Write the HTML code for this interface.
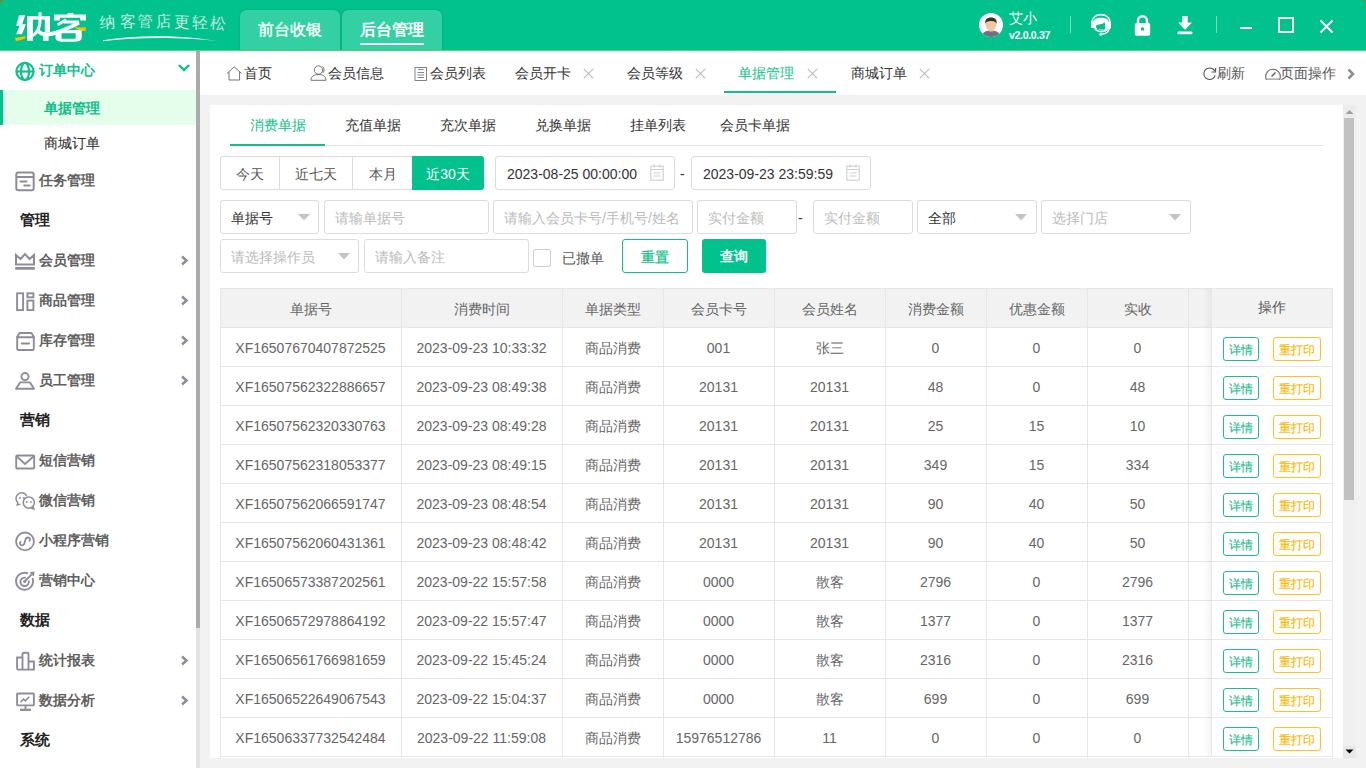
<!DOCTYPE html>
<html><head><meta charset="utf-8">
<style>
*{box-sizing:border-box;margin:0;padding:0}
html,body{width:1366px;height:768px;overflow:hidden}
body{position:relative;background:#f2f2f2;font-family:"Liberation Sans",sans-serif;font-size:14px;color:#333}
.a{position:absolute}
#hdr{left:0;top:0;width:1366px;height:50px;background:#01c18c}
#hdrline{left:0;top:50px;width:1366px;height:1px;background:#56d77a}
.htab{top:10px;height:40px;width:100px;background:#33d0a4;box-shadow:0 0 1.5px rgba(0,60,40,0.35);border-radius:6px 6px 0 0;color:#fff;font-size:16px;text-align:center;line-height:40px;font-weight:700}
#side{left:0;top:51px;width:196px;height:717px;background:#fff}
#sbar{left:196px;top:51px;width:4px;height:717px;background:#e3e3e3}
#sthumb{left:196px;top:51px;width:4px;height:577px;background:#ababab}
#tabs{left:200px;top:51px;width:1166px;height:44px;background:#fff}
.tb{top:0;height:44px;line-height:44px;font-size:14px;color:#333;white-space:nowrap}
.x{color:#bbb;font-size:16px}
#card{left:210px;top:105px;width:1133px;height:653px;background:#fff}
#vtrack{left:1343px;top:105px;width:13px;height:653px;background:#f0f0f0}
.mi{left:0;width:196px;height:40px;font-size:14px;color:#606060;font-weight:700}
.mi span{position:absolute;left:39px;top:0;line-height:40px}
.hd{left:20px;font-size:15px;color:#222;font-weight:700;line-height:40px}
.ico{position:absolute}
.chev{position:absolute;left:180px;top:15px}
.inp{position:absolute;height:34px;border:1px solid #dcdcdc;border-radius:3px;background:#fff;font-size:14px;color:#bbb;line-height:34px;padding-left:10px;white-space:nowrap;overflow:hidden}
.arr{position:absolute;top:13px;width:0;height:0;border-left:6px solid transparent;border-right:6px solid transparent;border-top:6px solid #c0c0c0}
table{border-collapse:collapse;table-layout:fixed}
td,th{border:1px solid #e8e8e8;height:39px;text-align:center;font-size:14px;color:#555;font-weight:400;white-space:nowrap;overflow:hidden}
th{background:#f2f2f2}
.bd{display:inline-block;height:23px;line-height:21px;font-size:12px;border:1px solid #1cbc8c;color:#1cbc8c;border-radius:3px;padding:0 5px;vertical-align:middle}
.by{border-color:#fbc31a;color:#f7b500}
</style></head><body>
<div id="hdr" class="a"></div>
<div id="hdrline" class="a"></div>
<div class="a htab" style="left:240px;font-weight:400;-webkit-text-stroke:0.35px #fff">前台收银</div>
<div class="a htab" style="left:342px">后台管理</div>
<div class="a" style="left:360px;top:43px;width:64px;height:2px;background:#fff"></div>

<svg class="a" style="left:0;top:0" width="240" height="50" viewBox="0 0 240 50">
<g fill="#fff">
<path d="M19 15.3 L25.1 15.3 L22.2 24.2 L25.9 24.2 L22 34.3 L16.2 34.3 L19.6 25.8 L16.2 25.8 Z"/>
<path d="M27 16.2 L32.9 16.2 L32.9 40.8 L27 40.8 Z"/>
<path d="M27 16.2 L50 16.2 L50 19.6 L27 19.6 Z"/>
<path d="M44.8 16.2 L50 16.2 L50 32 L44.8 33 Z"/>
<path d="M38.5 12.2 L41.6 12.2 L41.6 19.5 C41.6 27.5 38.8 33.5 33.5 37 L32.3 34.4 C36.6 31 38.5 26 38.5 19.5 Z"/>
<path d="M38.6 28.8 C41.2 31.8 44.3 32.8 48 32.5 C55 31.8 65 27.5 78.9 21 L79.6 24.6 C66 31.2 56 36 48 36.4 C43.3 36.7 39.6 35.4 37.2 32.4 Z"/>
<path d="M43 36.1 L48.6 36.1 L48.6 40.8 L43 40.8 Z"/>
<path d="M67.7 12.9 L73.3 12.9 L73.3 15 L67.7 15 Z"/>
<path d="M54.1 14.6 L86 14.6 L86 20.6 L80.3 20.6 L80.3 17.8 L59.7 17.8 L59.7 20.6 L54.1 20.6 Z"/>
<path d="M56.8 23.6 L65.4 18.6 L66.9 21 L58.3 26 Z"/>
<path d="M63.5 20.6 L79.2 20.6 L77.5 23.6 L63.5 23.6 Z"/>
<path d="M55.5 31 L81.7 29.6 L81.7 37.5 C81.7 40.5 79 41.8 73 41.8 L64 41.8 C58 41.8 55.5 40.5 55.5 37.5 Z M61.6 33.3 L61.6 38.7 L75.6 38.7 L75.6 33.3 Z" fill-rule="evenodd"/>
</g>
<path d="M15 37.5 C18.5 37.6 22 36.8 25.6 36 L25 38.4 C21.5 40 18.5 40.8 15.8 40.9 Z" fill="#fcbf00"/>
<path d="M73.5 26.7 C77.5 27.3 82 27.6 86 27.2 L85.5 31 C83 31.2 81.5 30.8 80.8 30.5 C78 29.5 75.5 28.2 73.5 26.7 Z" fill="#fcbf00"/>
<text x="100" y="27.5" font-size="15.5" fill="#fff" stroke="#01c18c" stroke-width="0.25" transform="rotate(-4 108 23)" style="font-family:'Liberation Sans',sans-serif">纳</text><text x="120" y="27.0" font-size="15.5" fill="#fff" stroke="#01c18c" stroke-width="0.25" transform="rotate(0 128 22.5)" style="font-family:'Liberation Sans',sans-serif">客</text><text x="137" y="26.0" font-size="15.5" fill="#fff" stroke="#01c18c" stroke-width="0.25" transform="rotate(3 145 21.5)" style="font-family:'Liberation Sans',sans-serif">管</text><text x="156" y="27.0" font-size="15.5" fill="#fff" stroke="#01c18c" stroke-width="0.25" transform="rotate(-3 164 22.5)" style="font-family:'Liberation Sans',sans-serif">店</text><text x="174" y="27.0" font-size="15.5" fill="#fff" stroke="#01c18c" stroke-width="0.25" transform="rotate(2 182 22.5)" style="font-family:'Liberation Sans',sans-serif">更</text><text x="192" y="28.0" font-size="15.5" fill="#fff" stroke="#01c18c" stroke-width="0.25" transform="rotate(0 200 23.5)" style="font-family:'Liberation Sans',sans-serif">轻</text><text x="210" y="28.5" font-size="15.5" fill="#fff" stroke="#01c18c" stroke-width="0.25" transform="rotate(4 218 24)" style="font-family:'Liberation Sans',sans-serif">松</text>
<path d="M103 40.3 C140 34 185 35.5 219 41.2 C185 37.3 140 36.5 103 41.2 Z" fill="#fff"/>
</svg>
<svg class="a" style="left:979px;top:13px" width="24" height="24" viewBox="0 0 24 24">
<defs><clipPath id="cp"><circle cx="12" cy="12" r="12"/></clipPath></defs>
<circle cx="12" cy="12" r="12" fill="#fff"/>
<g clip-path="url(#cp)">
<path d="M3 24 C3 19.5 6.5 17.5 12 17.5 C17.5 17.5 21 19.5 21 24 Z" fill="#6f7185"/>
<rect x="10" y="14.5" width="4" height="4" fill="#f0bf98"/>
<ellipse cx="12" cy="11.5" rx="5.5" ry="6" fill="#f4c7a1"/>
<path d="M6.2 11 C5.8 6.5 8.2 4.5 12 4.5 C15.8 4.5 18.2 6.5 17.8 11 C17 8.8 15.5 8 12 8 C8.5 8 7 8.8 6.2 11 Z" fill="#333"/>
</g></svg>
<div class="a" style="left:1009px;top:9px;font-size:14px;color:#fff;line-height:18px">艾小</div>
<div class="a" style="left:1009px;top:28.8px;font-size:10.6px;color:#fff;font-weight:700;line-height:13px;letter-spacing:-0.35px">v2.0.0.37</div>
<div class="a" style="left:1070px;top:16px;width:1px;height:17px;background:#7fdcbc"></div>
<svg class="a" style="left:1086px;top:10px" width="30" height="30" viewBox="0 0 30 30">
<path d="M6 13 C6 7.5 10 4.6 15 4.6 C20 4.6 24 7.5 24 13" fill="none" stroke="#fff" stroke-width="1.6"/>
<path d="M5.2 11.8 L9 11.8 L9 18 L5.2 18 Z M21.8 11.8 L25 11.8 L25 18.4 L21.8 18.4 Z" fill="#fff"/>
<path d="M7 13 C7 9.5 10.5 7.8 15 7.8 C19.5 7.8 23 9.5 23 13 L23 16 C23 19.5 20.5 22.3 15.5 22.3 C11 22.3 8.2 20 7.5 17 Z" fill="#fff"/>
<path d="M9.8 16 C10.5 15 13 14.3 15.5 14 C17 13.8 18 13 18.4 12.2 C19.2 13.5 19.3 15.5 19.1 17.5 C18.8 20 17.3 21 15 21 C12.3 21 10.2 19.5 9.8 16 Z" fill="#01c18c"/>
<path d="M13.3 19.6 C14.5 20.2 16 20.2 17.2 19.6" fill="none" stroke="#fff" stroke-width="0.9"/>
<path d="M23.5 18 C22.8 21.8 19.5 24 15.5 24.2" fill="none" stroke="#fff" stroke-width="1.3"/>
<circle cx="14.8" cy="24.2" r="1.5" fill="#fff"/>
</svg>
<svg class="a" style="left:1134px;top:15px" width="17" height="21" viewBox="0 0 17 21">
<path d="M4 9 L4 5.8 C4 3 6 1.3 8.5 1.3 C11 1.3 13 3 13 5.8 L13 9" fill="none" stroke="#fff" stroke-width="2.4"/>
<rect x="0.8" y="8" width="15.4" height="12.7" rx="1.8" fill="#fff"/>
<circle cx="8.5" cy="14" r="1.7" fill="#01c18c"/>
</svg>
<svg class="a" style="left:1177px;top:15px" width="16" height="20" viewBox="0 0 16 20">
<path d="M5.3 1 L10.7 1 L10.7 7.5 L15 7.5 L8 14.8 L1 7.5 L5.3 7.5 Z" fill="#fff"/>
<rect x="0.5" y="16.5" width="15" height="2.8" rx="1.2" fill="#fff"/>
</svg>
<div class="a" style="left:1216px;top:16px;width:1px;height:17px;background:#7fdcbc"></div>
<div class="a" style="left:1240px;top:27px;width:12px;height:2px;background:#fff"></div>
<div class="a" style="left:1278px;top:17px;width:16px;height:16px;border:2px solid #f4fbe3"></div>
<svg class="a" style="left:1319px;top:19px" width="15" height="15" viewBox="0 0 15 15">
<path d="M1.5 1.5 L13.5 13.5 M13.5 1.5 L1.5 13.5" stroke="#fff" stroke-width="1.9"/>
</svg>

<div id="side" class="a"></div>

<svg class="a" style="left:14px;top:61px" width="22" height="22" viewBox="0 0 22 22"><g fill="none" stroke="#10bf8a" stroke-width="2.2"><circle cx="11" cy="10.5" r="8.6"/><ellipse cx="11" cy="10.5" rx="4" ry="8.6"/><path d="M2.6 10.5 L19.4 10.5"/></g></svg>
<div class="a" style="left:39px;top:60px;font-size:14px;font-weight:700;color:#10bf8a;line-height:20px">订单中心</div>
<svg class="a" style="left:177px;top:63px" width="14" height="10" viewBox="0 0 14 10"><path d="M2 2 L7 7 L12 2" fill="none" stroke="#10bf8a" stroke-width="2.4"/></svg>
<div class="a" style="left:0;top:90px;width:196px;height:35px;background:#e5fdeb"></div>
<div class="a" style="left:0;top:90px;width:3px;height:35px;background:#01c18c"></div>
<div class="a" style="left:44px;top:98px;font-size:14px;font-weight:700;color:#10bf8a;line-height:20px">单据管理</div>
<div class="a" style="left:44px;top:133px;font-size:14px;color:#333;line-height:20px;font-weight:400;-webkit-text-stroke:0.1px #333">商城订单</div>
<svg class="a" style="left:15px;top:171px" width="20" height="21" viewBox="0 0 20 21"><g fill="none" stroke="#8d8d99" stroke-width="2"><rect x="1.3" y="1.4" width="17.4" height="17.8" rx="2"/><path d="M1.3 6 L18.7 6"/></g><g stroke="#8d8d99" stroke-width="2" stroke-linecap="round"><path d="M5.5 10.4 L11.5 10.4"/><path d="M9.3 14.5 L14.7 14.5"/></g></svg>
<div class="a mi" style="top:160px"><span>任务管理</span></div>
<div class="a hd" style="top:200px">管理</div>
<svg class="a" style="left:14px;top:252px" width="22" height="20" viewBox="0 0 22 20"><g fill="none" stroke="#8d8d99" stroke-width="2"><path d="M2 3 L2 12.5 L20 12.5 L20 3 L15.5 7 L11 2 L6.5 7 Z" stroke-linejoin="miter"/></g><rect x="1" y="15" width="20" height="2.8" rx="1.2" fill="#8d8d99"/></svg>
<div class="a mi" style="top:240px"><span>会员管理</span></div><svg class="a" style="left:180px;top:255px" width="9" height="11" viewBox="0 0 9 11"><path d="M2 1.5 L6.5 5.5 L2 9.5" fill="none" stroke="#8d8d99" stroke-width="2.5"/></svg>
<svg class="a" style="left:15px;top:291px" width="21" height="21" viewBox="0 0 21 21"><g fill="none" stroke="#8d8d99" stroke-width="1.9"><rect x="2.1" y="2.3" width="6" height="16.8"/><rect x="12.4" y="2.3" width="6" height="4"/><rect x="12.4" y="9.6" width="6" height="9.5"/></g></svg>
<div class="a mi" style="top:280px"><span>商品管理</span></div><svg class="a" style="left:180px;top:295px" width="9" height="11" viewBox="0 0 9 11"><path d="M2 1.5 L6.5 5.5 L2 9.5" fill="none" stroke="#8d8d99" stroke-width="2.5"/></svg>
<svg class="a" style="left:15px;top:331px" width="21" height="21" viewBox="0 0 21 21"><g fill="none" stroke="#8d8d99" stroke-width="1.9"><path d="M1.9 6.2 L4.5 2 L16.5 2 L19.1 6.2 Z" stroke-linejoin="round"/><path d="M2.2 6.2 L2.2 17.7 C2.2 18.5 2.7 19 3.5 19 L17.5 19 C18.3 19 18.8 18.5 18.8 17.7 L18.8 6.2"/></g><path d="M6.8 12.5 L14 12.5" stroke="#8d8d99" stroke-width="2.2" stroke-linecap="round"/></svg>
<div class="a mi" style="top:320px"><span>库存管理</span></div><svg class="a" style="left:180px;top:335px" width="9" height="11" viewBox="0 0 9 11"><path d="M2 1.5 L6.5 5.5 L2 9.5" fill="none" stroke="#8d8d99" stroke-width="2.5"/></svg>
<svg class="a" style="left:15px;top:371px" width="21" height="20" viewBox="0 0 21 20"><g fill="none" stroke="#8d8d99" stroke-width="1.9"><circle cx="10" cy="5.6" r="3.6"/><path d="M5 11.4 L15 11.4 L19 17.8 L1 17.8 Z" stroke-linejoin="round"/></g></svg>
<div class="a mi" style="top:360px"><span>员工管理</span></div><svg class="a" style="left:180px;top:375px" width="9" height="11" viewBox="0 0 9 11"><path d="M2 1.5 L6.5 5.5 L2 9.5" fill="none" stroke="#8d8d99" stroke-width="2.5"/></svg>
<div class="a hd" style="top:400px">营销</div>
<svg class="a" style="left:14px;top:453px" width="22" height="17" viewBox="0 0 22 17"><g fill="none" stroke="#8d8d99" stroke-width="1.9"><rect x="2.2" y="2.5" width="18" height="13" rx="1"/><path d="M2.8 3.5 L11 11 L19.5 3.5"/></g></svg>
<div class="a mi" style="top:440px"><span>短信营销</span></div>
<svg class="a" style="left:14px;top:491px" width="22" height="20" viewBox="0 0 22 20"><g fill="none" stroke="#8d8d99" stroke-width="1.5"><path d="M12.8 5.2 C11.8 3 10 1.8 7.8 1.8 C4.5 1.8 2 4.3 2 7.6 C2 9.2 2.7 10.6 3.8 11.6 L3.2 14 L6.5 13.1"/><circle cx="14.8" cy="11.6" r="5.6"/><path d="M18.8 15.6 L19.8 18 L17 16.8"/></g><g fill="#8d8d99"><circle cx="6" cy="7" r="0.9"/><circle cx="9.8" cy="7" r="0.9"/><circle cx="12.8" cy="11" r="0.9"/><circle cx="16.8" cy="11" r="0.9"/></g></svg>
<div class="a mi" style="top:480px"><span>微信营销</span></div>
<svg class="a" style="left:14px;top:530px" width="22" height="22" viewBox="0 0 22 22"><g fill="none" stroke="#8d8d99" stroke-width="1.8"><circle cx="11" cy="11.4" r="8.9"/><path d="M7.2 11.6 C5.6 12.2 5.4 14.6 7.2 15.2 C9 15.8 10.2 14.6 10.6 12.6 L11.4 10 C11.8 8.2 13 7.2 14.8 7.6 C16.6 8.2 16.4 10.6 14.8 11.2"/></g></svg>
<div class="a mi" style="top:520px"><span>小程序营销</span></div>
<svg class="a" style="left:14px;top:570px" width="22" height="22" viewBox="0 0 22 22"><g fill="none" stroke="#8d8d99" stroke-width="1.9"><path d="M18.5 8 C18.9 9 19.1 10 19.1 11.2 C19.1 16 15.3 19.8 10.6 19.8 C5.8 19.8 2 16 2 11.2 C2 6.5 5.8 2.7 10.6 2.7 C11.8 2.7 12.9 2.9 13.9 3.4"/><path d="M14.6 10.6 C14.7 11 14.8 11.4 14.8 11.8 C14.8 14.1 12.9 16 10.6 16 C8.3 16 6.4 14.1 6.4 11.8 C6.4 9.5 8.3 7.6 10.6 7.6 C11 7.6 11.4 7.7 11.8 7.8"/><path d="M10.6 11.5 L17.5 4.6"/></g><path d="M15.8 2.2 L17.3 4.8 L19.9 6.2 L20.6 1.5 Z" fill="#8d8d99"/><circle cx="10.6" cy="11.6" r="1.5" fill="#8d8d99"/></svg>
<div class="a mi" style="top:560px"><span>营销中心</span></div>
<div class="a hd" style="top:600px">数据</div>
<svg class="a" style="left:15px;top:651px" width="21" height="21" viewBox="0 0 21 21"><g fill="none" stroke="#8d8d99" stroke-width="1.9"><path d="M2.1 18.6 L2.1 6.5 L7.5 6.5 L7.5 18.6 M7.5 18.6 L7.5 3 C7.5 2.2 8 1.8 8.7 1.8 L12.3 1.8 C13 1.8 13.5 2.2 13.5 3 L13.5 18.6 M13.5 10.5 L18.9 10.5 L18.9 18.6 L2.1 18.6"/></g></svg>
<div class="a mi" style="top:640px"><span>统计报表</span></div><svg class="a" style="left:180px;top:655px" width="9" height="11" viewBox="0 0 9 11"><path d="M2 1.5 L6.5 5.5 L2 9.5" fill="none" stroke="#8d8d99" stroke-width="2.5"/></svg>
<svg class="a" style="left:15px;top:691px" width="21" height="21" viewBox="0 0 21 21"><g fill="none" stroke="#8d8d99" stroke-width="1.9"><rect x="2.1" y="2.5" width="16.8" height="11.9" rx="0.6"/><path d="M10.5 14.5 L10.5 18.5"/><path d="M5 18.8 L16 18.8" stroke-width="2.3"/><path d="M5.5 11.2 L8.6 8.2 L10.4 9.8 L14.2 5.7" stroke-width="1.6"/></g></svg>
<div class="a mi" style="top:680px"><span>数据分析</span></div><svg class="a" style="left:180px;top:695px" width="9" height="11" viewBox="0 0 9 11"><path d="M2 1.5 L6.5 5.5 L2 9.5" fill="none" stroke="#8d8d99" stroke-width="2.5"/></svg>
<div class="a hd" style="top:720px">系统</div>

<div id="sbar" class="a"></div>
<div id="sthumb" class="a"></div>
<div id="tabs" class="a"></div>
<svg class="a" style="left:226px;top:66px" width="17" height="15" viewBox="0 0 17 15"><path d="M1 7.5 L8.2 0.8 L15.6 7.5 M3 6 L3 14 L13.6 14 L13.6 6" fill="none" stroke="#666" stroke-width="0.9"/></svg>
<div class="a tb" style="left:244px;top:51px">首页</div>
<svg class="a" style="left:310px;top:65px" width="18" height="16" viewBox="0 0 18 16"><g fill="none" stroke="#666" stroke-width="0.9"><circle cx="8.5" cy="5" r="4.2"/><path d="M1 15.3 C1 11.5 4 9.5 8.5 9.5 C13 9.5 16 11.5 16 15.3 Z"/><path d="M12.5 1.5 C14.2 2.4 14.5 5.5 13.2 7.8"/></g></svg>
<div class="a tb" style="left:328px;top:51px">会员信息</div>
<svg class="a" style="left:414px;top:66px" width="14" height="15" viewBox="0 0 14 15"><g fill="none" stroke="#777" stroke-width="0.9"><rect x="1" y="1.5" width="11.5" height="13"/><path d="M4 3.5 L9.5 3.5 M3.5 6.5 L10 6.5 M3.5 9 L10 9 M3.5 11.5 L10 11.5"/></g></svg>
<div class="a tb" style="left:430px;top:51px">会员列表</div>
<div class="a tb" style="left:515px;top:51px">会员开卡</div>
<div class="a tb" style="left:627px;top:51px">会员等级</div>
<div class="a tb" style="left:738px;top:51px;color:#10bf8a">单据管理</div>
<div class="a" style="left:724px;top:91px;width:112px;height:2px;background:#10bf8a"></div>
<div class="a tb" style="left:851px;top:51px">商城订单</div>
<svg class="a" style="left:583px;top:68px" width="11" height="11" viewBox="0 0 11 11"><path d="M0.8 0.8 L10.2 10.2 M10.2 0.8 L0.8 10.2" stroke="#bdbdbd" stroke-width="1.2"/></svg>
<svg class="a" style="left:695px;top:68px" width="11" height="11" viewBox="0 0 11 11"><path d="M0.8 0.8 L10.2 10.2 M10.2 0.8 L0.8 10.2" stroke="#bdbdbd" stroke-width="1.2"/></svg>
<svg class="a" style="left:807px;top:68px" width="11" height="11" viewBox="0 0 11 11"><path d="M0.8 0.8 L10.2 10.2 M10.2 0.8 L0.8 10.2" stroke="#bdbdbd" stroke-width="1.2"/></svg>
<svg class="a" style="left:919px;top:68px" width="11" height="11" viewBox="0 0 11 11"><path d="M0.8 0.8 L10.2 10.2 M10.2 0.8 L0.8 10.2" stroke="#bdbdbd" stroke-width="1.2"/></svg>

<svg class="a" style="left:1203px;top:67px" width="14" height="14" viewBox="0 0 14 14"><path d="M11.8 4 C10.8 2.2 8.8 1 6.6 1 C3.4 1 0.9 3.6 0.9 6.8 C0.9 10 3.4 12.5 6.6 12.5 C9.2 12.5 11.4 10.8 12.1 8.4" fill="none" stroke="#555" stroke-width="1.1"/><path d="M12.6 1 L12.6 5 L8.6 5" fill="none" stroke="#555" stroke-width="1.1"/></svg>
<div class="a tb" style="left:1217px;top:51px;color:#555">刷新</div>
<svg class="a" style="left:1265px;top:67px" width="16" height="14" viewBox="0 0 16 14"><path d="M1.3 12.4 C0.8 11.4 0.7 10.5 0.7 9.6 C0.7 5.4 4 2.2 8 2.2 C12 2.2 15.3 5.4 15.3 9.6 C15.3 10.5 15.1 11.4 14.7 12.4 Z" fill="none" stroke="#666" stroke-width="1.1"/><path d="M1.5 12.2 L14.5 12.2" stroke="#bbb" stroke-width="1.4"/><path d="M6.5 9.5 L10.5 5.5" stroke="#555" stroke-width="1.2"/></svg>
<div class="a tb" style="left:1280px;top:51px;color:#555">页面操作</div>
<svg class="a" style="left:1346px;top:68px" width="10" height="12" viewBox="0 0 10 12"><path d="M2.5 1.5 L7 6 L2.5 10.5" fill="none" stroke="#8d8d99" stroke-width="2.5"/></svg>

<div id="card" class="a"></div>
<div id="vtrack" class="a"></div>
<div class="a" style="left:250px;top:115px;font-size:14px;color:#10bf8a;line-height:20px">消费单据</div>
<div class="a" style="left:345px;top:115px;font-size:14px;color:#333;line-height:20px">充值单据</div>
<div class="a" style="left:440px;top:115px;font-size:14px;color:#333;line-height:20px">充次单据</div>
<div class="a" style="left:535px;top:115px;font-size:14px;color:#333;line-height:20px">兑换单据</div>
<div class="a" style="left:630px;top:115px;font-size:14px;color:#333;line-height:20px">挂单列表</div>
<div class="a" style="left:720px;top:115px;font-size:14px;color:#333;line-height:20px">会员卡单据</div>
<div class="a" style="left:230px;top:145px;width:1093px;height:1px;background:#e4e4e4"></div>
<div class="a" style="left:230px;top:144px;width:95px;height:2px;background:#10bf8a"></div>

<div class="a" style="left:220px;top:156px;width:264px;height:34px;border:1px solid #dcdcdc;border-radius:3px;background:#fff"></div>
<div class="a" style="left:279px;top:157px;width:1px;height:32px;background:#dcdcdc"></div>
<div class="a" style="left:352px;top:157px;width:1px;height:32px;background:#dcdcdc"></div>
<div class="a" style="left:412px;top:156px;width:72px;height:34px;background:#01c18c;border-radius:0 3px 3px 0"></div>
<div class="a" style="left:220px;top:164px;width:59px;text-align:center;font-size:14px;color:#555;line-height:20px">今天</div>
<div class="a" style="left:280px;top:164px;width:72px;text-align:center;font-size:14px;color:#555;line-height:20px">近七天</div>
<div class="a" style="left:353px;top:164px;width:59px;text-align:center;font-size:14px;color:#555;line-height:20px">本月</div>
<div class="a" style="left:412px;top:164px;width:72px;text-align:center;font-size:14px;color:#fff;line-height:20px">近30天</div>

<div class="inp" style="left:495px;top:156px;width:180px;color:#333;padding-left:11px">2023-08-25 00:00:00</div>
<svg class="a" style="left:650px;top:164px" width="14" height="17" viewBox="0 0 14 17"><g fill="none" stroke="#cfcfcf" stroke-width="1.1"><rect x="0.8" y="2.2" width="12.4" height="14"/><path d="M0.8 5.5 L13.2 5.5 M4 0.5 L4 3.5 M10 0.5 L10 3.5 M3.5 9 L10.5 9 M3.5 12 L10.5 12"/></g></svg>
<div class="a" style="left:680px;top:164px;font-size:14px;color:#333;line-height:20px">-</div>
<div class="inp" style="left:691px;top:156px;width:180px;color:#333;padding-left:11px">2023-09-23 23:59:59</div>
<svg class="a" style="left:846px;top:164px" width="14" height="17" viewBox="0 0 14 17"><g fill="none" stroke="#cfcfcf" stroke-width="1.1"><rect x="0.8" y="2.2" width="12.4" height="14"/><path d="M0.8 5.5 L13.2 5.5 M4 0.5 L4 3.5 M10 0.5 L10 3.5 M3.5 9 L10.5 9 M3.5 12 L10.5 12"/></g></svg>

<div class="inp" style="left:220px;top:200px;width:99px;color:#333">单据号</div><svg class="a" style="left:298px;top:214px" width="12" height="7" viewBox="0 0 12 7"><path d="M0 0 L12 0 L6 6.5 Z" fill="#c4c4c4"/></svg>
<div class="inp" style="left:324px;top:200px;width:165px">请输单据号</div>
<div class="inp" style="left:493px;top:200px;width:200px">请输入会员卡号/手机号/姓名</div>
<div class="inp" style="left:697px;top:200px;width:100px">实付金额</div>
<div class="a" style="left:798px;top:208px;font-size:14px;color:#333;line-height:20px">-</div>
<div class="inp" style="left:813px;top:200px;width:100px">实付金额</div>
<div class="inp" style="left:917px;top:200px;width:120px;color:#333">全部</div><svg class="a" style="left:1015px;top:214px" width="12" height="7" viewBox="0 0 12 7"><path d="M0 0 L12 0 L6 6.5 Z" fill="#c4c4c4"/></svg>
<div class="inp" style="left:1041px;top:200px;width:150px">选择门店</div><svg class="a" style="left:1169px;top:214px" width="12" height="7" viewBox="0 0 12 7"><path d="M0 0 L12 0 L6 6.5 Z" fill="#c4c4c4"/></svg>

<div class="inp" style="left:220px;top:239px;width:139px">请选择操作员</div><svg class="a" style="left:338px;top:253px" width="12" height="7" viewBox="0 0 12 7"><path d="M0 0 L12 0 L6 6.5 Z" fill="#c4c4c4"/></svg>
<div class="inp" style="left:364px;top:239px;width:165px">请输入备注</div>
<div class="a" style="left:533px;top:249px;width:18px;height:18px;border:1px solid #d0d0d0;border-radius:2px;background:#fff"></div>
<div class="a" style="left:562px;top:248px;font-size:14px;color:#555;line-height:20px">已撤单</div>
<div class="a" style="left:622px;top:239px;width:66px;height:34px;border:1px solid #10bf8a;border-radius:3px;color:#10bf8a;text-align:center;line-height:34px;font-size:14px;-webkit-text-stroke:0.25px #10bf8a">重置</div>
<div class="a" style="left:702px;top:239px;width:64px;height:34px;background:#01c18c;border-radius:3px;color:#fff;text-align:center;line-height:35px;font-size:14px;font-weight:400;-webkit-text-stroke:0.45px #fff">查询</div>

<div class="a" style="left:220px;top:288px;width:1112px;height:39px;background:#f2f2f2"></div>
<div class="a" style="left:220px;top:288px;width:1113px;height:1px;background:#e6e6e6"></div>
<div class="a" style="left:220px;top:327px;width:1113px;height:1px;background:#e6e6e6"></div>
<div class="a" style="left:220px;top:366px;width:1113px;height:1px;background:#e6e6e6"></div>
<div class="a" style="left:220px;top:405px;width:1113px;height:1px;background:#e6e6e6"></div>
<div class="a" style="left:220px;top:444px;width:1113px;height:1px;background:#e6e6e6"></div>
<div class="a" style="left:220px;top:483px;width:1113px;height:1px;background:#e6e6e6"></div>
<div class="a" style="left:220px;top:522px;width:1113px;height:1px;background:#e6e6e6"></div>
<div class="a" style="left:220px;top:561px;width:1113px;height:1px;background:#e6e6e6"></div>
<div class="a" style="left:220px;top:600px;width:1113px;height:1px;background:#e6e6e6"></div>
<div class="a" style="left:220px;top:639px;width:1113px;height:1px;background:#e6e6e6"></div>
<div class="a" style="left:220px;top:678px;width:1113px;height:1px;background:#e6e6e6"></div>
<div class="a" style="left:220px;top:717px;width:1113px;height:1px;background:#e6e6e6"></div>
<div class="a" style="left:220px;top:756px;width:1113px;height:1px;background:#e6e6e6"></div>
<div class="a" style="left:220px;top:288px;width:1px;height:470px;background:#e6e6e6"></div>
<div class="a" style="left:401px;top:288px;width:1px;height:470px;background:#e6e6e6"></div>
<div class="a" style="left:562px;top:288px;width:1px;height:470px;background:#e6e6e6"></div>
<div class="a" style="left:663px;top:288px;width:1px;height:470px;background:#e6e6e6"></div>
<div class="a" style="left:774px;top:288px;width:1px;height:470px;background:#e6e6e6"></div>
<div class="a" style="left:885px;top:288px;width:1px;height:470px;background:#e6e6e6"></div>
<div class="a" style="left:986px;top:288px;width:1px;height:470px;background:#e6e6e6"></div>
<div class="a" style="left:1087px;top:288px;width:1px;height:470px;background:#e6e6e6"></div>
<div class="a" style="left:1188px;top:288px;width:1px;height:470px;background:#e6e6e6"></div>
<div class="a" style="left:1332px;top:288px;width:1px;height:470px;background:#e6e6e6"></div>
<div class="a" style="left:220px;top:288px;width:181px;height:39px;line-height:43px;text-align:center;font-size:14px;color:#666;white-space:nowrap">单据号</div><div class="a" style="left:401px;top:288px;width:161px;height:39px;line-height:43px;text-align:center;font-size:14px;color:#666;white-space:nowrap">消费时间</div><div class="a" style="left:562px;top:288px;width:101px;height:39px;line-height:43px;text-align:center;font-size:14px;color:#666;white-space:nowrap">单据类型</div><div class="a" style="left:663px;top:288px;width:111px;height:39px;line-height:43px;text-align:center;font-size:14px;color:#666;white-space:nowrap">会员卡号</div><div class="a" style="left:774px;top:288px;width:111px;height:39px;line-height:43px;text-align:center;font-size:14px;color:#666;white-space:nowrap">会员姓名</div><div class="a" style="left:885px;top:288px;width:101px;height:39px;line-height:43px;text-align:center;font-size:14px;color:#666;white-space:nowrap">消费金额</div><div class="a" style="left:986px;top:288px;width:101px;height:39px;line-height:43px;text-align:center;font-size:14px;color:#666;white-space:nowrap">优惠金额</div><div class="a" style="left:1087px;top:288px;width:101px;height:39px;line-height:43px;text-align:center;font-size:14px;color:#666;white-space:nowrap">实收</div>
<div class="a" style="left:220px;top:327px;width:181px;height:39px;line-height:43px;text-align:center;font-size:14px;color:#666;white-space:nowrap">XF16507670407872525</div><div class="a" style="left:401px;top:327px;width:161px;height:39px;line-height:43px;text-align:center;font-size:14px;color:#666;white-space:nowrap">2023-09-23 10:33:32</div><div class="a" style="left:562px;top:327px;width:101px;height:39px;line-height:43px;text-align:center;font-size:14px;color:#666;white-space:nowrap">商品消费</div><div class="a" style="left:663px;top:327px;width:111px;height:39px;line-height:43px;text-align:center;font-size:14px;color:#666;white-space:nowrap">001</div><div class="a" style="left:774px;top:327px;width:111px;height:39px;line-height:43px;text-align:center;font-size:14px;color:#666;white-space:nowrap">张三</div><div class="a" style="left:885px;top:327px;width:101px;height:39px;line-height:43px;text-align:center;font-size:14px;color:#666;white-space:nowrap">0</div><div class="a" style="left:986px;top:327px;width:101px;height:39px;line-height:43px;text-align:center;font-size:14px;color:#666;white-space:nowrap">0</div><div class="a" style="left:1087px;top:327px;width:101px;height:39px;line-height:43px;text-align:center;font-size:14px;color:#666;white-space:nowrap">0</div>
<div class="a" style="left:220px;top:366px;width:181px;height:39px;line-height:43px;text-align:center;font-size:14px;color:#666;white-space:nowrap">XF16507562322886657</div><div class="a" style="left:401px;top:366px;width:161px;height:39px;line-height:43px;text-align:center;font-size:14px;color:#666;white-space:nowrap">2023-09-23 08:49:38</div><div class="a" style="left:562px;top:366px;width:101px;height:39px;line-height:43px;text-align:center;font-size:14px;color:#666;white-space:nowrap">商品消费</div><div class="a" style="left:663px;top:366px;width:111px;height:39px;line-height:43px;text-align:center;font-size:14px;color:#666;white-space:nowrap">20131</div><div class="a" style="left:774px;top:366px;width:111px;height:39px;line-height:43px;text-align:center;font-size:14px;color:#666;white-space:nowrap">20131</div><div class="a" style="left:885px;top:366px;width:101px;height:39px;line-height:43px;text-align:center;font-size:14px;color:#666;white-space:nowrap">48</div><div class="a" style="left:986px;top:366px;width:101px;height:39px;line-height:43px;text-align:center;font-size:14px;color:#666;white-space:nowrap">0</div><div class="a" style="left:1087px;top:366px;width:101px;height:39px;line-height:43px;text-align:center;font-size:14px;color:#666;white-space:nowrap">48</div>
<div class="a" style="left:220px;top:405px;width:181px;height:39px;line-height:43px;text-align:center;font-size:14px;color:#666;white-space:nowrap">XF16507562320330763</div><div class="a" style="left:401px;top:405px;width:161px;height:39px;line-height:43px;text-align:center;font-size:14px;color:#666;white-space:nowrap">2023-09-23 08:49:28</div><div class="a" style="left:562px;top:405px;width:101px;height:39px;line-height:43px;text-align:center;font-size:14px;color:#666;white-space:nowrap">商品消费</div><div class="a" style="left:663px;top:405px;width:111px;height:39px;line-height:43px;text-align:center;font-size:14px;color:#666;white-space:nowrap">20131</div><div class="a" style="left:774px;top:405px;width:111px;height:39px;line-height:43px;text-align:center;font-size:14px;color:#666;white-space:nowrap">20131</div><div class="a" style="left:885px;top:405px;width:101px;height:39px;line-height:43px;text-align:center;font-size:14px;color:#666;white-space:nowrap">25</div><div class="a" style="left:986px;top:405px;width:101px;height:39px;line-height:43px;text-align:center;font-size:14px;color:#666;white-space:nowrap">15</div><div class="a" style="left:1087px;top:405px;width:101px;height:39px;line-height:43px;text-align:center;font-size:14px;color:#666;white-space:nowrap">10</div>
<div class="a" style="left:220px;top:444px;width:181px;height:39px;line-height:43px;text-align:center;font-size:14px;color:#666;white-space:nowrap">XF16507562318053377</div><div class="a" style="left:401px;top:444px;width:161px;height:39px;line-height:43px;text-align:center;font-size:14px;color:#666;white-space:nowrap">2023-09-23 08:49:15</div><div class="a" style="left:562px;top:444px;width:101px;height:39px;line-height:43px;text-align:center;font-size:14px;color:#666;white-space:nowrap">商品消费</div><div class="a" style="left:663px;top:444px;width:111px;height:39px;line-height:43px;text-align:center;font-size:14px;color:#666;white-space:nowrap">20131</div><div class="a" style="left:774px;top:444px;width:111px;height:39px;line-height:43px;text-align:center;font-size:14px;color:#666;white-space:nowrap">20131</div><div class="a" style="left:885px;top:444px;width:101px;height:39px;line-height:43px;text-align:center;font-size:14px;color:#666;white-space:nowrap">349</div><div class="a" style="left:986px;top:444px;width:101px;height:39px;line-height:43px;text-align:center;font-size:14px;color:#666;white-space:nowrap">15</div><div class="a" style="left:1087px;top:444px;width:101px;height:39px;line-height:43px;text-align:center;font-size:14px;color:#666;white-space:nowrap">334</div>
<div class="a" style="left:220px;top:483px;width:181px;height:39px;line-height:43px;text-align:center;font-size:14px;color:#666;white-space:nowrap">XF16507562066591747</div><div class="a" style="left:401px;top:483px;width:161px;height:39px;line-height:43px;text-align:center;font-size:14px;color:#666;white-space:nowrap">2023-09-23 08:48:54</div><div class="a" style="left:562px;top:483px;width:101px;height:39px;line-height:43px;text-align:center;font-size:14px;color:#666;white-space:nowrap">商品消费</div><div class="a" style="left:663px;top:483px;width:111px;height:39px;line-height:43px;text-align:center;font-size:14px;color:#666;white-space:nowrap">20131</div><div class="a" style="left:774px;top:483px;width:111px;height:39px;line-height:43px;text-align:center;font-size:14px;color:#666;white-space:nowrap">20131</div><div class="a" style="left:885px;top:483px;width:101px;height:39px;line-height:43px;text-align:center;font-size:14px;color:#666;white-space:nowrap">90</div><div class="a" style="left:986px;top:483px;width:101px;height:39px;line-height:43px;text-align:center;font-size:14px;color:#666;white-space:nowrap">40</div><div class="a" style="left:1087px;top:483px;width:101px;height:39px;line-height:43px;text-align:center;font-size:14px;color:#666;white-space:nowrap">50</div>
<div class="a" style="left:220px;top:522px;width:181px;height:39px;line-height:43px;text-align:center;font-size:14px;color:#666;white-space:nowrap">XF16507562060431361</div><div class="a" style="left:401px;top:522px;width:161px;height:39px;line-height:43px;text-align:center;font-size:14px;color:#666;white-space:nowrap">2023-09-23 08:48:42</div><div class="a" style="left:562px;top:522px;width:101px;height:39px;line-height:43px;text-align:center;font-size:14px;color:#666;white-space:nowrap">商品消费</div><div class="a" style="left:663px;top:522px;width:111px;height:39px;line-height:43px;text-align:center;font-size:14px;color:#666;white-space:nowrap">20131</div><div class="a" style="left:774px;top:522px;width:111px;height:39px;line-height:43px;text-align:center;font-size:14px;color:#666;white-space:nowrap">20131</div><div class="a" style="left:885px;top:522px;width:101px;height:39px;line-height:43px;text-align:center;font-size:14px;color:#666;white-space:nowrap">90</div><div class="a" style="left:986px;top:522px;width:101px;height:39px;line-height:43px;text-align:center;font-size:14px;color:#666;white-space:nowrap">40</div><div class="a" style="left:1087px;top:522px;width:101px;height:39px;line-height:43px;text-align:center;font-size:14px;color:#666;white-space:nowrap">50</div>
<div class="a" style="left:220px;top:561px;width:181px;height:39px;line-height:43px;text-align:center;font-size:14px;color:#666;white-space:nowrap">XF16506573387202561</div><div class="a" style="left:401px;top:561px;width:161px;height:39px;line-height:43px;text-align:center;font-size:14px;color:#666;white-space:nowrap">2023-09-22 15:57:58</div><div class="a" style="left:562px;top:561px;width:101px;height:39px;line-height:43px;text-align:center;font-size:14px;color:#666;white-space:nowrap">商品消费</div><div class="a" style="left:663px;top:561px;width:111px;height:39px;line-height:43px;text-align:center;font-size:14px;color:#666;white-space:nowrap">0000</div><div class="a" style="left:774px;top:561px;width:111px;height:39px;line-height:43px;text-align:center;font-size:14px;color:#666;white-space:nowrap">散客</div><div class="a" style="left:885px;top:561px;width:101px;height:39px;line-height:43px;text-align:center;font-size:14px;color:#666;white-space:nowrap">2796</div><div class="a" style="left:986px;top:561px;width:101px;height:39px;line-height:43px;text-align:center;font-size:14px;color:#666;white-space:nowrap">0</div><div class="a" style="left:1087px;top:561px;width:101px;height:39px;line-height:43px;text-align:center;font-size:14px;color:#666;white-space:nowrap">2796</div>
<div class="a" style="left:220px;top:600px;width:181px;height:39px;line-height:43px;text-align:center;font-size:14px;color:#666;white-space:nowrap">XF16506572978864192</div><div class="a" style="left:401px;top:600px;width:161px;height:39px;line-height:43px;text-align:center;font-size:14px;color:#666;white-space:nowrap">2023-09-22 15:57:47</div><div class="a" style="left:562px;top:600px;width:101px;height:39px;line-height:43px;text-align:center;font-size:14px;color:#666;white-space:nowrap">商品消费</div><div class="a" style="left:663px;top:600px;width:111px;height:39px;line-height:43px;text-align:center;font-size:14px;color:#666;white-space:nowrap">0000</div><div class="a" style="left:774px;top:600px;width:111px;height:39px;line-height:43px;text-align:center;font-size:14px;color:#666;white-space:nowrap">散客</div><div class="a" style="left:885px;top:600px;width:101px;height:39px;line-height:43px;text-align:center;font-size:14px;color:#666;white-space:nowrap">1377</div><div class="a" style="left:986px;top:600px;width:101px;height:39px;line-height:43px;text-align:center;font-size:14px;color:#666;white-space:nowrap">0</div><div class="a" style="left:1087px;top:600px;width:101px;height:39px;line-height:43px;text-align:center;font-size:14px;color:#666;white-space:nowrap">1377</div>
<div class="a" style="left:220px;top:639px;width:181px;height:39px;line-height:43px;text-align:center;font-size:14px;color:#666;white-space:nowrap">XF16506561766981659</div><div class="a" style="left:401px;top:639px;width:161px;height:39px;line-height:43px;text-align:center;font-size:14px;color:#666;white-space:nowrap">2023-09-22 15:45:24</div><div class="a" style="left:562px;top:639px;width:101px;height:39px;line-height:43px;text-align:center;font-size:14px;color:#666;white-space:nowrap">商品消费</div><div class="a" style="left:663px;top:639px;width:111px;height:39px;line-height:43px;text-align:center;font-size:14px;color:#666;white-space:nowrap">0000</div><div class="a" style="left:774px;top:639px;width:111px;height:39px;line-height:43px;text-align:center;font-size:14px;color:#666;white-space:nowrap">散客</div><div class="a" style="left:885px;top:639px;width:101px;height:39px;line-height:43px;text-align:center;font-size:14px;color:#666;white-space:nowrap">2316</div><div class="a" style="left:986px;top:639px;width:101px;height:39px;line-height:43px;text-align:center;font-size:14px;color:#666;white-space:nowrap">0</div><div class="a" style="left:1087px;top:639px;width:101px;height:39px;line-height:43px;text-align:center;font-size:14px;color:#666;white-space:nowrap">2316</div>
<div class="a" style="left:220px;top:678px;width:181px;height:39px;line-height:43px;text-align:center;font-size:14px;color:#666;white-space:nowrap">XF16506522649067543</div><div class="a" style="left:401px;top:678px;width:161px;height:39px;line-height:43px;text-align:center;font-size:14px;color:#666;white-space:nowrap">2023-09-22 15:04:37</div><div class="a" style="left:562px;top:678px;width:101px;height:39px;line-height:43px;text-align:center;font-size:14px;color:#666;white-space:nowrap">商品消费</div><div class="a" style="left:663px;top:678px;width:111px;height:39px;line-height:43px;text-align:center;font-size:14px;color:#666;white-space:nowrap">0000</div><div class="a" style="left:774px;top:678px;width:111px;height:39px;line-height:43px;text-align:center;font-size:14px;color:#666;white-space:nowrap">散客</div><div class="a" style="left:885px;top:678px;width:101px;height:39px;line-height:43px;text-align:center;font-size:14px;color:#666;white-space:nowrap">699</div><div class="a" style="left:986px;top:678px;width:101px;height:39px;line-height:43px;text-align:center;font-size:14px;color:#666;white-space:nowrap">0</div><div class="a" style="left:1087px;top:678px;width:101px;height:39px;line-height:43px;text-align:center;font-size:14px;color:#666;white-space:nowrap">699</div>
<div class="a" style="left:220px;top:717px;width:181px;height:39px;line-height:43px;text-align:center;font-size:14px;color:#666;white-space:nowrap">XF16506337732542484</div><div class="a" style="left:401px;top:717px;width:161px;height:39px;line-height:43px;text-align:center;font-size:14px;color:#666;white-space:nowrap">2023-09-22 11:59:08</div><div class="a" style="left:562px;top:717px;width:101px;height:39px;line-height:43px;text-align:center;font-size:14px;color:#666;white-space:nowrap">商品消费</div><div class="a" style="left:663px;top:717px;width:111px;height:39px;line-height:43px;text-align:center;font-size:14px;color:#666;white-space:nowrap">15976512786</div><div class="a" style="left:774px;top:717px;width:111px;height:39px;line-height:43px;text-align:center;font-size:14px;color:#666;white-space:nowrap">11</div><div class="a" style="left:885px;top:717px;width:101px;height:39px;line-height:43px;text-align:center;font-size:14px;color:#666;white-space:nowrap">0</div><div class="a" style="left:986px;top:717px;width:101px;height:39px;line-height:43px;text-align:center;font-size:14px;color:#666;white-space:nowrap">0</div><div class="a" style="left:1087px;top:717px;width:101px;height:39px;line-height:43px;text-align:center;font-size:14px;color:#666;white-space:nowrap">0</div>
<div class="a" style="left:1204px;top:288px;width:7px;height:468px;background:linear-gradient(to right,rgba(0,0,0,0),rgba(0,0,0,0.045))"></div>
<div class="a" style="left:1211px;top:288px;width:121px;height:39px;background:#f2f2f2"></div>
<div class="a" style="left:1211px;top:288px;width:121px;height:39px;line-height:39px;text-align:center;font-size:14px;color:#555">操作</div>
<div class="a" style="left:1211px;top:328px;width:121px;height:38px;background:#fff"></div>
<div class="a" style="left:1223px;top:337px;width:36px;height:24px;border:1px solid #1dbd8c;border-radius:3px;color:#1dbd8c;font-size:12px;line-height:24px;text-align:center;-webkit-text-stroke:0.15px #1dbd8c">详情</div>
<div class="a" style="left:1273px;top:337px;width:48px;height:24px;border:1px solid #fdc220;border-radius:3px;color:#f9b800;font-size:12px;line-height:24px;text-align:center;-webkit-text-stroke:0.15px #f9b800">重打印</div>
<div class="a" style="left:1211px;top:367px;width:121px;height:38px;background:#fff"></div>
<div class="a" style="left:1223px;top:376px;width:36px;height:24px;border:1px solid #1dbd8c;border-radius:3px;color:#1dbd8c;font-size:12px;line-height:24px;text-align:center;-webkit-text-stroke:0.15px #1dbd8c">详情</div>
<div class="a" style="left:1273px;top:376px;width:48px;height:24px;border:1px solid #fdc220;border-radius:3px;color:#f9b800;font-size:12px;line-height:24px;text-align:center;-webkit-text-stroke:0.15px #f9b800">重打印</div>
<div class="a" style="left:1211px;top:406px;width:121px;height:38px;background:#fff"></div>
<div class="a" style="left:1223px;top:415px;width:36px;height:24px;border:1px solid #1dbd8c;border-radius:3px;color:#1dbd8c;font-size:12px;line-height:24px;text-align:center;-webkit-text-stroke:0.15px #1dbd8c">详情</div>
<div class="a" style="left:1273px;top:415px;width:48px;height:24px;border:1px solid #fdc220;border-radius:3px;color:#f9b800;font-size:12px;line-height:24px;text-align:center;-webkit-text-stroke:0.15px #f9b800">重打印</div>
<div class="a" style="left:1211px;top:445px;width:121px;height:38px;background:#fff"></div>
<div class="a" style="left:1223px;top:454px;width:36px;height:24px;border:1px solid #1dbd8c;border-radius:3px;color:#1dbd8c;font-size:12px;line-height:24px;text-align:center;-webkit-text-stroke:0.15px #1dbd8c">详情</div>
<div class="a" style="left:1273px;top:454px;width:48px;height:24px;border:1px solid #fdc220;border-radius:3px;color:#f9b800;font-size:12px;line-height:24px;text-align:center;-webkit-text-stroke:0.15px #f9b800">重打印</div>
<div class="a" style="left:1211px;top:484px;width:121px;height:38px;background:#fff"></div>
<div class="a" style="left:1223px;top:493px;width:36px;height:24px;border:1px solid #1dbd8c;border-radius:3px;color:#1dbd8c;font-size:12px;line-height:24px;text-align:center;-webkit-text-stroke:0.15px #1dbd8c">详情</div>
<div class="a" style="left:1273px;top:493px;width:48px;height:24px;border:1px solid #fdc220;border-radius:3px;color:#f9b800;font-size:12px;line-height:24px;text-align:center;-webkit-text-stroke:0.15px #f9b800">重打印</div>
<div class="a" style="left:1211px;top:523px;width:121px;height:38px;background:#fff"></div>
<div class="a" style="left:1223px;top:532px;width:36px;height:24px;border:1px solid #1dbd8c;border-radius:3px;color:#1dbd8c;font-size:12px;line-height:24px;text-align:center;-webkit-text-stroke:0.15px #1dbd8c">详情</div>
<div class="a" style="left:1273px;top:532px;width:48px;height:24px;border:1px solid #fdc220;border-radius:3px;color:#f9b800;font-size:12px;line-height:24px;text-align:center;-webkit-text-stroke:0.15px #f9b800">重打印</div>
<div class="a" style="left:1211px;top:562px;width:121px;height:38px;background:#fff"></div>
<div class="a" style="left:1223px;top:571px;width:36px;height:24px;border:1px solid #1dbd8c;border-radius:3px;color:#1dbd8c;font-size:12px;line-height:24px;text-align:center;-webkit-text-stroke:0.15px #1dbd8c">详情</div>
<div class="a" style="left:1273px;top:571px;width:48px;height:24px;border:1px solid #fdc220;border-radius:3px;color:#f9b800;font-size:12px;line-height:24px;text-align:center;-webkit-text-stroke:0.15px #f9b800">重打印</div>
<div class="a" style="left:1211px;top:601px;width:121px;height:38px;background:#fff"></div>
<div class="a" style="left:1223px;top:610px;width:36px;height:24px;border:1px solid #1dbd8c;border-radius:3px;color:#1dbd8c;font-size:12px;line-height:24px;text-align:center;-webkit-text-stroke:0.15px #1dbd8c">详情</div>
<div class="a" style="left:1273px;top:610px;width:48px;height:24px;border:1px solid #fdc220;border-radius:3px;color:#f9b800;font-size:12px;line-height:24px;text-align:center;-webkit-text-stroke:0.15px #f9b800">重打印</div>
<div class="a" style="left:1211px;top:640px;width:121px;height:38px;background:#fff"></div>
<div class="a" style="left:1223px;top:649px;width:36px;height:24px;border:1px solid #1dbd8c;border-radius:3px;color:#1dbd8c;font-size:12px;line-height:24px;text-align:center;-webkit-text-stroke:0.15px #1dbd8c">详情</div>
<div class="a" style="left:1273px;top:649px;width:48px;height:24px;border:1px solid #fdc220;border-radius:3px;color:#f9b800;font-size:12px;line-height:24px;text-align:center;-webkit-text-stroke:0.15px #f9b800">重打印</div>
<div class="a" style="left:1211px;top:679px;width:121px;height:38px;background:#fff"></div>
<div class="a" style="left:1223px;top:688px;width:36px;height:24px;border:1px solid #1dbd8c;border-radius:3px;color:#1dbd8c;font-size:12px;line-height:24px;text-align:center;-webkit-text-stroke:0.15px #1dbd8c">详情</div>
<div class="a" style="left:1273px;top:688px;width:48px;height:24px;border:1px solid #fdc220;border-radius:3px;color:#f9b800;font-size:12px;line-height:24px;text-align:center;-webkit-text-stroke:0.15px #f9b800">重打印</div>
<div class="a" style="left:1211px;top:718px;width:121px;height:38px;background:#fff"></div>
<div class="a" style="left:1223px;top:727px;width:36px;height:24px;border:1px solid #1dbd8c;border-radius:3px;color:#1dbd8c;font-size:12px;line-height:24px;text-align:center;-webkit-text-stroke:0.15px #1dbd8c">详情</div>
<div class="a" style="left:1273px;top:727px;width:48px;height:24px;border:1px solid #fdc220;border-radius:3px;color:#f9b800;font-size:12px;line-height:24px;text-align:center;-webkit-text-stroke:0.15px #f9b800">重打印</div>
<div class="a" style="left:1211px;top:288px;width:121px;height:1px;background:#e6e6e6"></div>
<div class="a" style="left:1211px;top:327px;width:121px;height:1px;background:#e6e6e6"></div>
<div class="a" style="left:1211px;top:366px;width:121px;height:1px;background:#e6e6e6"></div>
<div class="a" style="left:1211px;top:405px;width:121px;height:1px;background:#e6e6e6"></div>
<div class="a" style="left:1211px;top:444px;width:121px;height:1px;background:#e6e6e6"></div>
<div class="a" style="left:1211px;top:483px;width:121px;height:1px;background:#e6e6e6"></div>
<div class="a" style="left:1211px;top:522px;width:121px;height:1px;background:#e6e6e6"></div>
<div class="a" style="left:1211px;top:561px;width:121px;height:1px;background:#e6e6e6"></div>
<div class="a" style="left:1211px;top:600px;width:121px;height:1px;background:#e6e6e6"></div>
<div class="a" style="left:1211px;top:639px;width:121px;height:1px;background:#e6e6e6"></div>
<div class="a" style="left:1211px;top:678px;width:121px;height:1px;background:#e6e6e6"></div>
<div class="a" style="left:1211px;top:717px;width:121px;height:1px;background:#e6e6e6"></div>
<div class="a" style="left:1211px;top:756px;width:121px;height:1px;background:#e6e6e6"></div>
<div class="a" style="left:1343px;top:105px;width:13px;height:13px;background:#ececec"></div>
<svg class="a" style="left:1343px;top:105px" width="13" height="13" viewBox="0 0 13 13"><path d="M2.5 9 L6.5 5 L10.5 9 Z" fill="#a0a0a0"/></svg>
<div class="a" style="left:1344px;top:118px;width:10px;height:382px;background:#c1c1c1"></div>
<div class="a" style="left:1343px;top:746px;width:13px;height:12px;background:#e8e8e8"></div>
<svg class="a" style="left:1343px;top:746px" width="13" height="12" viewBox="0 0 13 12"><path d="M2.5 3.5 L10.5 3.5 L6.5 7.5 Z" fill="#000"/></svg>
<svg class="a" style="left:0;top:0" width="4" height="4" viewBox="0 0 4 4"><path d="M0 0 L3.5 0 L0 3.5 Z" fill="#6f8f2a"/></svg>
<svg class="a" style="left:1362px;top:0" width="4" height="4" viewBox="0 0 4 4"><path d="M0.5 0 L4 0 L4 3.5 Z" fill="#6f8f2a"/></svg>
<div class="a" style="left:1211px;top:288px;width:1px;height:468px;background:#e6e6e6"></div>
</body></html>
